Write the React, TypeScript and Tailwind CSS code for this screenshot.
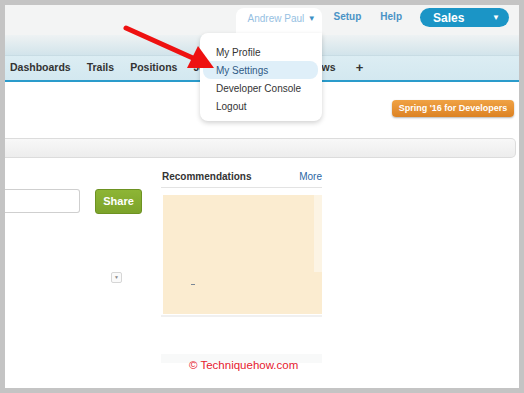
export default function App() {
  return (
    <div className="w-[524px] h-[393px] bg-[#c4c4c4] p-[5px] font-['Liberation_Sans',Arial,sans-serif]">
      <div className="relative w-[514px] h-[383px] bg-white overflow-hidden flex flex-col">
        {/* top header */}
        <div className="h-[30px] bg-[#f3f4f4] flex items-start justify-end pr-[10px] pt-[3px] shrink-0">
          <div className="w-[86px] h-[27px] bg-white rounded-t-[8px] flex items-start pt-[5px] pl-[12px] text-[10px] text-[#6aa6d6] leading-[12px]">
            <span className="opacity-70">Andrew Paul</span>
            <span className="ml-auto mr-[6px] text-[8px] text-[#3d8fc4]">▼</span>
          </div>
          <div className="ml-[12px] mt-[3px] text-[10px] font-bold text-[#4a93c6] leading-[12px]">Setup</div>
          <div className="ml-[19px] mt-[3px] text-[10px] font-bold text-[#4a93c6] leading-[12px]">Help</div>
          <div className="ml-[18px] w-[89px] h-[19px] rounded-full bg-[#1b95c6] flex items-center pl-[13px] pr-[9px] text-white">
            <span className="text-[12px] font-bold">Sales</span>
            <span className="ml-auto text-[8px]">▼</span>
          </div>
        </div>
        {/* gradient band */}
        <div className="h-[21px] bg-linear-to-b from-[#eef2f3] to-[#d2e4eb] border-b border-[#c8dce4] shrink-0" />
        {/* nav */}
        <div className="h-[24px] bg-linear-to-b from-[#dcedf3] to-[#d3e8f0] flex items-center pl-[5px] gap-[16px] text-[10.5px] font-bold text-[#333] shrink-0">
          <span>Dashboards</span>
          <span>Trails</span>
          <span>Positions</span>
          <span>Job Applications</span>
          <span>Reviews</span>
          <span className="text-[13px] ml-[4px]">+</span>
        </div>
        <div className="h-[2px] bg-[#2a9bcb] shrink-0" />

        {/* body */}
        <div className="mt-[18px] flex justify-end pr-[5px]">
          <div className="w-[122px] h-[17px] rounded-[4px] bg-linear-to-b from-[#f0a244] to-[#dc8222] shadow-[0_1px_2px_rgba(0,0,0,0.3)] flex items-center justify-center text-white text-[9px] font-bold">
            Spring &apos;16 for Developers
          </div>
        </div>
        <div className="mt-[21px] mr-[3px] h-[20px] rounded-r-[5px] border border-l-0 border-[#dcdcdc] bg-linear-to-b from-[#f8f8f8] to-[#ededed]" />

        <div className="flex">
          <div className="w-[137px] flex flex-col">
            <div className="mt-[31px] flex">
              <div className="w-[75px] h-[24px] border border-l-0 border-[#cfcfcf] rounded-r-[3px] bg-white" />
              <div className="ml-[15px] w-[47px] h-[25px] rounded-[3px] bg-linear-to-b from-[#8db535] to-[#7ca32a] border border-[#6d9222] flex items-center justify-center text-white text-[11px] font-bold">
                Share
              </div>
            </div>
            <div className="mt-[58px] ml-[106px] w-[11px] h-[11px] rounded-[2px] border border-[#d6d6d6] bg-[#fafafa] flex items-center justify-center text-[5px] text-[#888]">
              ▼
            </div>
          </div>

          <div className="ml-[19px] w-[161px] flex flex-col">
            <div className="pt-[12px] pb-[3px] flex items-center leading-[14px] border-b border-[#e3e3e3]">
              <span className="ml-[1px] text-[10px] font-bold text-[#333]">Recommendations</span>
              <span className="ml-auto text-[10px] text-[#2b67a4]">More</span>
            </div>
            <div className="mt-[7px] ml-[2px] flex flex-col">
              <div className="flex h-[77px]">
                <div className="flex-1 bg-[#fbecd0]" />
                <div className="w-[8px] bg-[#fcf4e4]" />
              </div>
              <div className="h-[42px] bg-[#fbecd0] pt-[12px] pl-[28px]">
                <div className="w-[4px] h-[1px] bg-[#7a8796]" />
              </div>
            </div>
            <div className="mt-[1px] h-[2px] bg-[#f0f0f0]" />
            <div className="mt-[37px] h-[9px] bg-[#f8f9f9]" />
          </div>
        </div>

        {/* dropdown menu */}
        <div className="absolute left-[195px] top-[28px] w-[122px] h-[88px] bg-white rounded-[8px] rounded-tr-none shadow-[0_2px_5px_rgba(0,0,0,0.18)] pt-[10px] flex flex-col text-[10px] text-[#333]">
          <div className="h-[18px] flex items-center pl-[16px]">My Profile</div>
          <div className="h-[18px] flex items-center pl-[13px] ml-[3px] mr-[4px] rounded-[8px] bg-[#dfeff9] text-[#2f5a86]">My Settings</div>
          <div className="h-[18px] flex items-center pl-[16px]">Developer Console</div>
          <div className="h-[18px] flex items-center pl-[16px]">Logout</div>
        </div>

        {/* red arrow */}
        <svg className="absolute left-0 top-0 pointer-events-none" width="514" height="383" viewBox="0 0 514 383">
          <line x1="121" y1="23" x2="190" y2="54" stroke="#ee1111" strokeWidth="5" strokeLinecap="round" />
          <polygon points="209,63 182,63 193,41" fill="#ee1111" />
        </svg>

        {/* watermark */}
        <div className="absolute left-[184px] top-[353px] text-[11.5px] leading-[14px] text-[#e5202e]">
          © Techniquehow.com
        </div>
      </div>
    </div>
  );
}
